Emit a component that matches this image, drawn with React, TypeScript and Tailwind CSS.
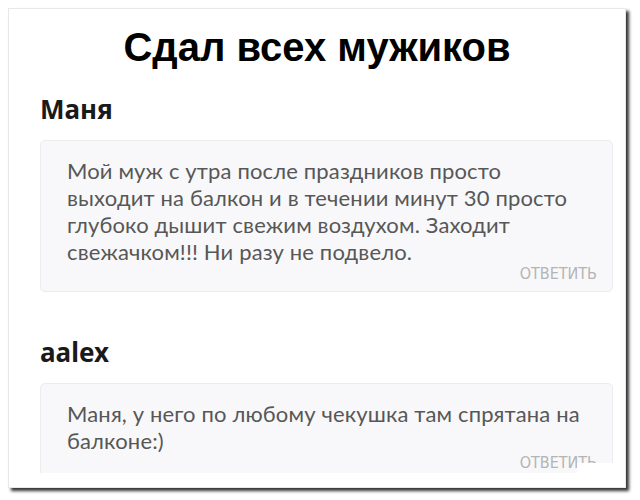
import React from "react";

type Comment = {
  author: string;
  lines: string[];
};

const comments: Comment[] = [
  {
    author: "Маня",
    lines: [
      "Мой муж с утра после праздников просто",
      "выходит на балкон и в течении минут 30 просто",
      "глубоко дышит свежим воздухом. Заходит",
      "свежачком!!! Ни разу не подвело.",
    ],
  },
  {
    author: "aalex",
    lines: ["Маня, у него по любому чекушка там спрятана на", "балконе:)"],
  },
];

function CommentCard({ comment }: { comment: Comment }) {
  return (
    <div>
      <div className="text-[26px] font-bold leading-[30px] text-[#1a1a1a] [font-family:'Noto_Sans',sans-serif]">
        {comment.author}
      </div>
      <div className="mt-[16px] rounded-[5px] border border-[#ececee] bg-[#f8f8fa] pl-[26px] pr-[15px] pt-[16px] pb-[8px]">
        <div className="text-[22px] leading-[27px] tracking-[0.15px] text-[#575757] [font-family:Lato,'Open_Sans',sans-serif]">
          {comment.lines.map((line, i) => (
            <div key={i}>{line}</div>
          ))}
        </div>
        <div className="text-right text-[16px] uppercase leading-[18px] text-[#b4b4b4] [font-family:'DejaVu_Sans_Condensed','Open_Sans',sans-serif]">
          ответить
        </div>
      </div>
    </div>
  );
}

export default function App() {
  return (
    <div className="h-[500px] w-[640px] bg-white pl-[8px] pt-[8px]">
      <div className="relative h-[480px] w-[618px] overflow-hidden border border-[#e8e8e8] bg-white shadow-[3px_3px_3px_rgba(0,0,0,0.8)]">
        {/* header */}
        <h1 className="pt-[14px] text-center text-[40px] font-bold leading-[48px] text-black [font-family:'Liberation_Sans',Arial,sans-serif]">
          Сдал всех мужиков
        </h1>

        <div className="flex h-[402px] flex-col gap-[45px] overflow-hidden pl-[31px] pr-[12px] pt-[23px]">
          {comments.map((c) => (
            <CommentCard key={c.author} comment={c} />
          ))}
        </div>

        {/* cropped corner of the second card */}
        <div className="absolute left-[568px] top-[454px] h-[12px] w-[50px] bg-white" />
      </div>
    </div>
  );
}
